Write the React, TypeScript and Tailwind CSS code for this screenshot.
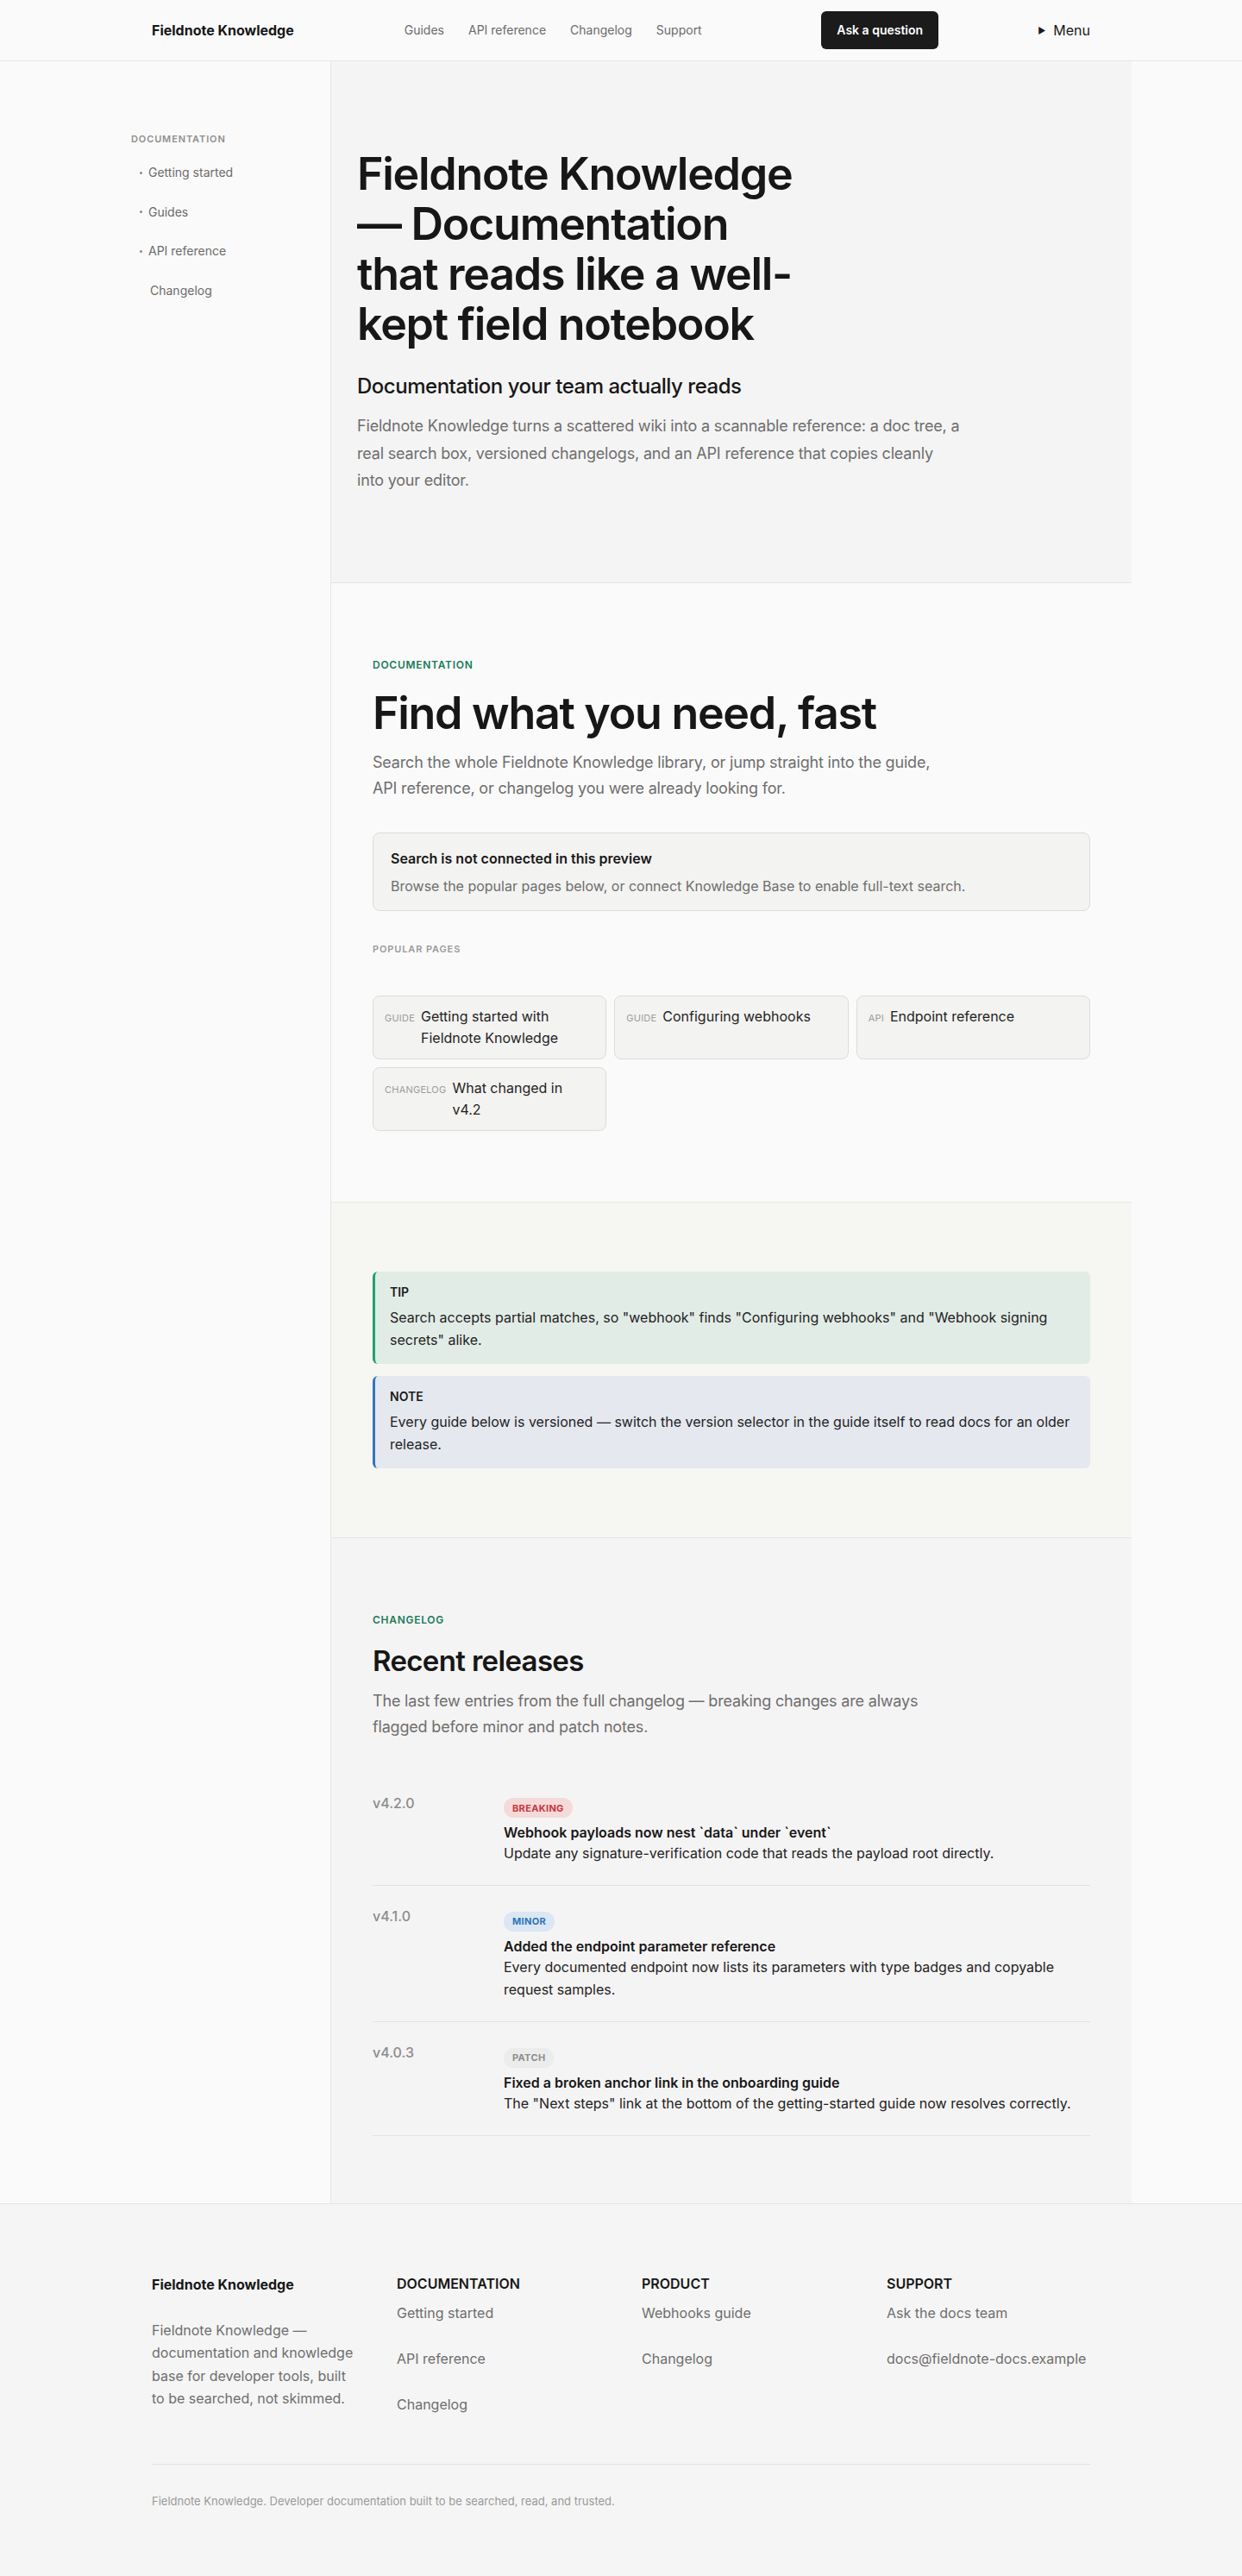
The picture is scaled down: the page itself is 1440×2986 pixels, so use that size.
import React from 'react';

const navLinks = ['Guides', 'API reference', 'Changelog', 'Support'];

const sideLinks = [
  { label: 'Getting started', dot: true },
  { label: 'Guides', dot: true },
  { label: 'API reference', dot: true },
  { label: 'Changelog', dot: false },
];

const popularPages = [
  { kind: 'Guide', title: 'Getting started with Fieldnote Knowledge' },
  { kind: 'Guide', title: 'Configuring webhooks' },
  { kind: 'API', title: 'Endpoint reference' },
  { kind: 'Changelog', title: 'What changed in v4.2' },
];

const releases = [
  {
    version: 'v4.2.0',
    tag: 'Breaking',
    tagClass: 'bg-[#f5dada] text-[#c8363d]',
    title: 'Webhook payloads now nest `data` under `event`',
    body: 'Update any signature-verification code that reads the payload root directly.',
  },
  {
    version: 'v4.1.0',
    tag: 'Minor',
    tagClass: 'bg-[#dbe7f3] text-[#2f74ba]',
    title: 'Added the endpoint parameter reference',
    body: 'Every documented endpoint now lists its parameters with type badges and copyable request samples.',
  },
  {
    version: 'v4.0.3',
    tag: 'Patch',
    tagClass: 'bg-[#ececec] text-[#8d8d8d]',
    title: 'Fixed a broken anchor link in the onboarding guide',
    body: 'The "Next steps" link at the bottom of the getting-started guide now resolves correctly.',
  },
];

const footerColumns = [
  { heading: 'Documentation', links: ['Getting started', 'API reference', 'Changelog'] },
  { heading: 'Product', links: ['Webhooks guide', 'Changelog'] },
  { heading: 'Support', links: ['Ask the docs team', 'docs@fieldnote-docs.example'] },
];

const Eyebrow = ({ children }: { children: React.ReactNode }) => (
  <p className="text-xs font-semibold uppercase leading-4 tracking-[0.06em] text-[#1b7a5a]">{children}</p>
);

const Header = () => (
  <header className="border-b border-[#e6e6e6] bg-[#fafafa]">
    <div className="mx-auto flex h-[70px] max-w-[1088px] items-center">
      <a href="#" className="text-base font-bold text-[#161616]">
        Fieldnote Knowledge
      </a>
      <nav className="ml-[128px] flex items-center gap-7 text-sm text-[#6b6b6b]">
        {navLinks.map((link) => (
          <a key={link} href="#">
            {link}
          </a>
        ))}
      </nav>
      <button className="ml-auto h-11 rounded-md bg-[#1b1b1b] px-[18px] text-sm font-semibold text-white">
        Ask a question
      </button>
      <button className="ml-[115px] flex items-center gap-[9px] text-base text-[#1a1a1a]">
        <span className="text-[10px] leading-none">▶</span>
        Menu
      </button>
    </div>
  </header>
);

const Sidebar = () => (
  <aside className="w-[384px] shrink-0 border-r border-[#e6e6e6] pl-[152px] pt-[82px]">
    <p className="text-[11px] font-semibold uppercase leading-4 tracking-[0.08em] text-[#8f8f8f]">Documentation</p>
    <ul className="mt-[21px] flex flex-col gap-[25.5px] text-sm leading-5 text-[#6b6b6b]">
      {sideLinks.map((item) => (
        <li key={item.label} className="flex items-center">
          {item.dot ? (
            <span className="ml-[10px] mr-[7px] h-[3px] w-[3px] rounded-full bg-[#8a8a8a]" />
          ) : (
            <span className="w-[22px]" />
          )}
          <a href="#">{item.label}</a>
        </li>
      ))}
    </ul>
  </aside>
);

const Hero = () => (
  <section className="border-b border-[#e3e3e3] bg-[#f4f4f4] pb-[102px] pl-[30px] pr-12 pt-[102px]">
    <h1 className="max-w-[520px] text-[52px] font-semibold leading-[58px] tracking-[-0.025em] text-[#171717]">
      Fieldnote Knowledge — Documentation that reads like a well-kept field notebook
    </h1>
    <h2 className="mt-[27px] text-2xl font-medium leading-8 tracking-[-0.02em] text-[#171717]">
      Documentation your team actually reads
    </h2>
    <p className="mt-[14px] max-w-[702px] text-lg leading-[31.5px] tracking-[-0.01em] text-[#6e6e6e]">
      Fieldnote Knowledge turns a scattered wiki into a scannable reference: a doc tree, a real search box, versioned
      changelogs, and an API reference that copies cleanly into your editor.
    </p>
  </section>
);

const SearchSection = () => (
  <section className="border-b border-[#e6e6e6] bg-[#fafafa] px-12 pb-[82px] pt-[87px]">
    <Eyebrow>Documentation</Eyebrow>
    <h2 className="mt-[19px] text-[52px] font-semibold leading-[58px] tracking-[-0.025em] text-[#171717]">
      Find what you need, fast
    </h2>
    <p className="mt-[13px] max-w-[648px] text-lg leading-[30px] tracking-[-0.01em] text-[#6e6e6e]">
      Search the whole Fieldnote Knowledge library, or jump straight into the guide, API reference, or changelog you
      were already looking for.
    </p>

    <div className="mt-9 rounded-lg border border-[#dcdcd8] bg-[#f3f3f1] px-5 pb-4 pt-[17px]">
      <p className="text-base font-semibold leading-6 text-[#171717]">Search is not connected in this preview</p>
      <p className="mt-2 text-base leading-6 text-[#6e6e6e]">
        Browse the popular pages below, or connect Knowledge Base to enable full-text search.
      </p>
    </div>

    <p className="mt-9 text-[11px] font-semibold uppercase leading-4 tracking-[0.08em] text-[#9a9a9a]">Popular pages</p>
    <div className="mt-[46px] grid grid-cols-3 gap-[9px]">
      {popularPages.map((page) => (
        <a
          key={page.title}
          href="#"
          className="flex items-baseline gap-[7px] rounded-lg border border-[#dcdcd8] bg-[#f3f3f1] px-[13px] py-[11px]"
        >
          <span className="shrink-0 text-[11px] uppercase tracking-[0.02em] text-[#9d9d9d]">{page.kind}</span>
          <span className="text-base leading-[25px] text-[#1f1f1f]">{page.title}</span>
        </a>
      ))}
    </div>
  </section>
);

const Callouts = () => (
  <section className="border-b border-[#e6e6e6] bg-[#f6f6f3] px-12 py-20">
    <div className="rounded-md border-l-[3px] border-[#23a06c] bg-[#e2ece7] pb-[15px] pl-[17px] pr-5 pt-4">
      <p className="text-sm font-semibold uppercase leading-4 text-[#1a1a1a]">Tip</p>
      <p className="mt-2 text-base leading-[26px] text-[#222222]">
        Search accepts partial matches, so "webhook" finds "Configuring webhooks" and "Webhook signing secrets" alike.
      </p>
    </div>
    <div className="mt-3.5 rounded-md border-l-[3px] border-[#3576bd] bg-[#e5e8ef] pb-[15px] pl-[17px] pr-5 pt-4">
      <p className="text-sm font-semibold uppercase leading-4 text-[#1a1a1a]">Note</p>
      <p className="mt-2 text-base leading-[26px] text-[#222222]">
        Every guide below is versioned — switch the version selector in the guide itself to read docs for an older
        release.
      </p>
    </div>
  </section>
);

const Changelog = () => (
  <section className="bg-[#f5f4f4] px-12 pb-[78px] pt-[87px]">
    <Eyebrow>Changelog</Eyebrow>
    <h2 className="mt-[19px] text-[33px] font-semibold leading-[41px] tracking-[-0.02em] text-[#171717]">
      Recent releases
    </h2>
    <p className="mt-[11px] max-w-[648px] text-lg leading-[30px] tracking-[-0.01em] text-[#6e6e6e]">
      The last few entries from the full changelog — breaking changes are always flagged before minor and patch notes.
    </p>

    <div className="mt-[38px]">
      {releases.map((release) => (
        <div key={release.version} className="grid grid-cols-[152px_1fr] border-b border-[#e2e2e2] pb-6 pt-[27px]">
          <span className="-mt-[3px] text-base font-medium leading-[22px] text-[#8c8c8c]">{release.version}</span>
          <div>
            <span
              className={`inline-flex h-[23px] items-center rounded-full px-2.5 text-[11px] font-bold uppercase tracking-[0.03em] ${release.tagClass}`}
            >
              {release.tag}
            </span>
            <p className="mt-[6px] text-base font-semibold leading-[22px] text-[#171717]">{release.title}</p>
            <p className="text-base leading-[26px] text-[#222222]">{release.body}</p>
          </div>
        </div>
      ))}
    </div>
  </section>
);

const Footer = () => (
  <footer className="border-t border-[#e3e3e3] bg-[#f5f5f5]">
    <div className="mx-auto max-w-[1088px] pb-20 pt-[81px]">
      <div className="grid grid-cols-4 gap-12">
        <div>
          <p className="text-base font-bold leading-6 text-[#171717]">Fieldnote Knowledge</p>
          <p className="mt-7 text-base leading-[26.5px] text-[#6e6e6e]">
            Fieldnote Knowledge — documentation and knowledge base for developer tools, built to be searched, not
            skimmed.
          </p>
        </div>
        {footerColumns.map((col) => (
          <div key={col.heading}>
            <h3 className="text-base font-semibold uppercase leading-[22px] text-[#171717]">{col.heading}</h3>
            <ul className="mt-[10px] flex flex-col gap-[27px] text-base leading-[26px] text-[#6e6e6e]">
              {col.links.map((link) => (
                <li key={link}>
                  <a href="#">{link}</a>
                </li>
              ))}
            </ul>
          </div>
        ))}
      </div>
      <div className="mt-14 border-t border-[#e0e0e0] pt-8 text-[13px] leading-5 text-[#9a9a9a]">
        Fieldnote Knowledge. Developer documentation built to be searched, read, and trusted.
      </div>
    </div>
  </footer>
);

export default function App() {
  return (
    <div className="min-h-screen bg-[#fafafa] font-[Inter,ui-sans-serif,sans-serif] text-[#171717] antialiased">
      <Header />
      <div className="flex">
        <Sidebar />
        <main className="w-[928px]">
          <Hero />
          <SearchSection />
          <Callouts />
          <Changelog />
        </main>
      </div>
      <Footer />
    </div>
  );
}
